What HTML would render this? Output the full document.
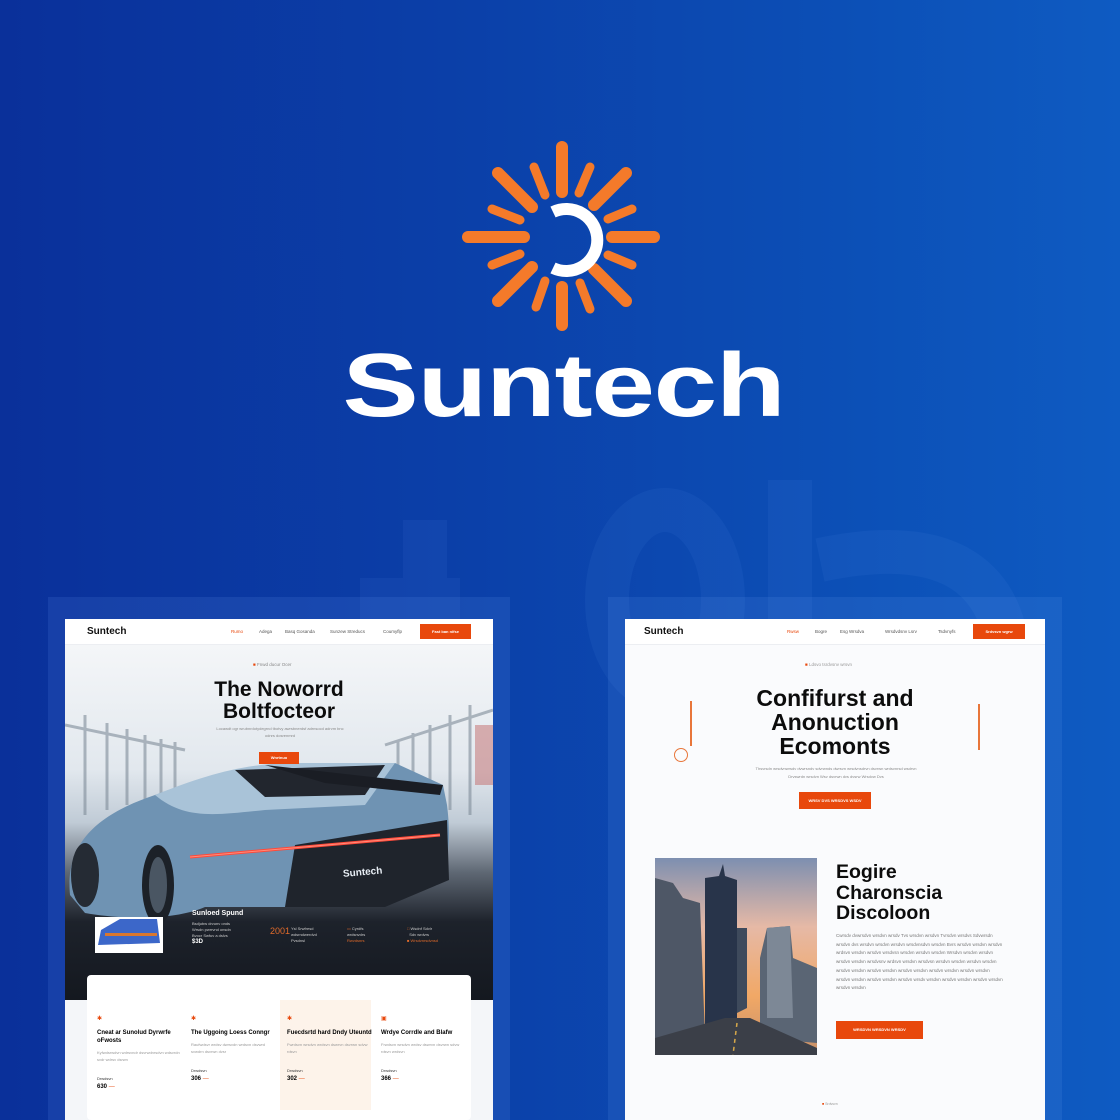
<!DOCTYPE html>
<html><head><meta charset="utf-8"><style>
*{margin:0;padding:0;box-sizing:border-box}
body{width:1120px;height:1120px;overflow:hidden;position:relative;font-family:"Liberation Sans",sans-serif;background:linear-gradient(90deg,#0a309a 0%,#0b3fa8 40%,#0c4fb6 75%,#0e5bc2 100%)}
.abs{position:absolute}
.brand{position:absolute;left:342px;top:341px;width:443px;text-align:center;font-weight:bold;font-size:90px;color:#fff;line-height:1;transform:scaleX(1.27);transform-origin:center;letter-spacing:-1px}
.panel{position:absolute;background:rgba(120,170,255,0.12)}
.page{position:absolute;background:#fafbfd;overflow:hidden}
.hdr{position:absolute;left:0;top:0;right:0;height:26px;background:#fff;border-bottom:1px solid #eceef2}
.logo{position:absolute;left:22px;top:7px;font-weight:bold;font-size:10px;color:#111}
.nav{position:absolute;top:10px;font-size:4.5px;color:#555}
.btn{position:absolute;background:#e8480c;color:#fff;font-size:4px;text-align:center;font-weight:bold}
.tiny{font-size:4.5px;color:#999;line-height:8px}
.h{font-weight:bold;color:#0c0c0c;font-family:"Liberation Sans",sans-serif}
</style></head><body>
<svg class="abs" style="left:0;top:0" width="1120" height="1120">
<g fill="none" stroke="rgba(120,170,255,0.07)" stroke-width="44">
<ellipse cx="665" cy="600" rx="58" ry="90"/>
<line x1="790" y1="480" x2="790" y2="700"/>
<path d="M820 560 Q 1010 520 1010 680"/>
<path d="M425 520 L425 640 M360 600 L460 600"/>
</g>
</svg>
<svg class="abs" style="left:0;top:0" width="1120" height="420">
<g stroke="#f47a2a" stroke-linecap="round" transform="translate(562,237)">
<g stroke-width="12">
<line x1="0" y1="-45" x2="0" y2="-90"/>
<line x1="0" y1="50" x2="0" y2="88"/>
<line x1="-38" y1="0" x2="-94" y2="0"/>
<line x1="50" y1="0" x2="92" y2="0"/>
<line x1="-30" y1="-30" x2="-64" y2="-64"/>
<line x1="32" y1="-32" x2="64" y2="-64"/>
<line x1="-30" y1="30" x2="-64" y2="64"/>
<line x1="32" y1="32" x2="64" y2="64"/>
</g>
<g stroke-width="9">
<line x1="-17" y1="-42" x2="-28" y2="-70"/>
<line x1="17" y1="-44" x2="28" y2="-70"/>
<line x1="-42" y1="-17" x2="-70" y2="-28"/>
<line x1="-42" y1="17" x2="-70" y2="28"/>
<line x1="46" y1="-18" x2="70" y2="-28"/>
<line x1="46" y1="18" x2="70" y2="28"/>
<line x1="-17" y1="44" x2="-26" y2="70"/>
<line x1="18" y1="46" x2="28" y2="72"/>
</g>
</g>
<path d="M553 212 A31 31 0 1 1 553 268" fill="none" stroke="#fff" stroke-width="12"/>
</svg>
<div class="brand">Suntech</div>

<div class="panel" style="left:48px;top:597px;width:462px;height:523px"></div>
<div class="panel" style="left:608px;top:597px;width:454px;height:523px"></div>

<div class="page" style="left:65px;top:619px;width:428px;height:501px;background:#f4f6f9">
 <div class="abs" style="left:0;top:26px;width:428px;height:355px;background:linear-gradient(180deg,#f4f6f8 0%,#e2e8ee 35%,#c0cbd6 50%,#5f6874 64%,#1d222b 78%,#14181f 100%)"></div>
 <svg class="abs" style="left:0;top:26px" width="428" height="355">
  <g stroke="#7f8c99" stroke-width="3" opacity=".6">
   <line x1="20" y1="70" x2="20" y2="170"/><line x1="42" y1="78" x2="42" y2="165"/><line x1="62" y1="84" x2="62" y2="160"/><line x1="80" y1="90" x2="80" y2="155"/><line x1="96" y1="94" x2="96" y2="150"/><line x1="110" y1="97" x2="110" y2="145"/>
   <line x1="405" y1="60" x2="405" y2="170"/><line x1="385" y1="70" x2="385" y2="165"/><line x1="365" y1="80" x2="365" y2="160"/><line x1="348" y1="88" x2="348" y2="150"/><line x1="333" y1="95" x2="333" y2="145"/>
   <line x1="0" y1="80" x2="120" y2="105"/><line x1="428" y1="65" x2="320" y2="100"/>
  </g>
  <rect x="410" y="80" width="18" height="60" fill="#c26a6a" opacity=".5"/>
  <path d="M5 250 C0 200 30 170 90 150 C130 135 170 122 210 120 L330 118 L378 140 L382 160 C387 200 382 225 372 240 L300 262 L140 262 C110 275 60 275 20 268 Z" fill="#6f93b3"/>
  <path d="M90 150 C140 130 180 118 230 118 L330 118 L300 160 L200 165 C150 170 120 175 90 150Z" fill="#a9c3d8"/>
  <path d="M170 125 L320 120 L300 150 L200 152Z" fill="#22262e"/>
  <path d="M200 120 L378 140 L375 150 L260 138Z" fill="#1a1d24"/>
  <path d="M230 200 L382 175 L384 235 L320 262 L220 262Z" fill="#1f242c"/>
  <path d="M125 212 L375 190" stroke="#ff4a3a" stroke-width="3"/>
  <path d="M125 212 L375 190" stroke="#ff8c7a" stroke-width="1"/>
  <ellipse cx="20" cy="230" rx="14" ry="32" fill="#252b34"/>
  <ellipse cx="93" cy="240" rx="16" ry="40" fill="#1c2128"/>
  <ellipse cx="93" cy="240" rx="9" ry="28" fill="#4a5663"/>
  <text x="278" y="230" fill="#e8eef5" font-size="10" font-weight="bold" transform="rotate(-5 300 228)">Suntech</text>
  <rect x="30" y="272" width="68" height="36" fill="#fff"/>
  <path d="M33 300 L36 285 L55 274 L92 274 L95 298 Z" fill="#3c67c9"/>
  <rect x="40" y="288" width="52" height="3" fill="#d9772f"/>
 </svg>
 <div class="hdr"><div class="logo">Suntech</div>
  <div class="nav" style="left:166px;color:#e8480c">Rumo</div><div class="nav" style="left:194px">Adega</div><div class="nav" style="left:220px">Basq Gosanda</div><div class="nav" style="left:265px">Sunzew Streducs</div><div class="nav" style="left:318px">Coumyflp</div>
  <div class="btn" style="left:355px;top:5px;width:51px;height:15px;line-height:15px">Fast ban nifse</div></div>
 <div class="abs tiny" style="left:188px;top:42px;color:#888"><span style="color:#e8480c">■</span> Fnwd ducur Ocer</div>
 <div class="abs h" style="left:100px;top:60px;width:228px;text-align:center;font-size:21px;line-height:22px">The Noworrd<br>Boltfocteor</div>
 <div class="abs tiny" style="left:150px;top:106px;width:130px;text-align:center;font-size:4px;line-height:7px;color:#888">Locawdt ogr wrubnrdotydegrnd tbotvy awrsbnerdsf adrnsocd adrvm bnc odnrs dosrenmrd</div>
 <div class="btn" style="left:194px;top:133px;width:40px;height:12px;line-height:12px">Wnrtnuo</div>
 <div class="abs" style="left:127px;top:291px;font-size:7px;font-weight:bold;color:#fff">Sunloed Spund</div>
 <div class="abs" style="left:127px;top:302px;font-size:4px;line-height:6px;color:#ccc">Bsdjubw drvunv onds<br>Wrsdn pwrrvnd onsdn<br>Bvocr Swfuv a dslvs<br><b style="font-size:6px;color:#fff">$3D</b></div>
 <div class="abs" style="left:205px;top:307px;font-size:9px;color:#e06a2a">2001</div>
 <div class="abs" style="left:226px;top:307px;font-size:4px;line-height:6px;color:#ccc">Ysl Srwfresd<br>wdsrndwerdvd<br>Pvsdnsl</div>
 <div class="abs" style="left:282px;top:307px;font-size:4px;line-height:6px;color:#ccc"><span style="color:#e06a2a">▭</span> Cyrdfs<br>wrdsnvdrs<br><span style="color:#e06a2a">Rwvdsnrs</span></div>
 <div class="abs" style="left:342px;top:307px;font-size:4px;line-height:6px;color:#ccc"><span style="color:#e06a2a">□</span> Wsdnf Sdvlr<br>&nbsp;&nbsp;Sdv wrdvrs<br><span style="color:#e06a2a">■ Wrsdvnrsdvnsd</span></div>
 <div class="abs" style="left:22px;top:356px;width:384px;height:145px;background:#fff;border-radius:4px"></div>
 <div class="abs" style="left:215px;top:381px;width:91px;height:110px;background:#fdf3ea"></div>
 <div class="abs" style="left:32px;top:396px;width:90px;font-size:6px;line-height:8px"><span style="color:#e8480c">✱</span><div style="margin-top:6px"><b>Cneat ar Sunolud Dyrwrfe oFwosts</b></div><div class="tiny" style="font-size:4px;line-height:6.5px;margin-top:5px">Kyfwdsrwdvn wdrsvndr dsvrwdnrsdvn wdsvrdn svdr wdrsv dsrwn</div><div style="font-size:4px;margin-top:12px;color:#333">Drwdsvn</div><b style="font-size:6px">630</b> <span style="color:#e8480c">—</span></div>
 <div class="abs" style="left:126px;top:396px;width:85px;font-size:6px;line-height:8px"><span style="color:#e8480c">✱</span><div style="margin-top:6px"><b>The Uggoing Loess Conngr</b></div><div class="tiny" style="font-size:4px;line-height:6.5px;margin-top:5px">Raufwdsvr wrdsv dwrsvdn wrdsvn dsvwrd svwdrn dsvrwn dvsr</div><div style="font-size:4px;margin-top:12px;color:#333">Drwdsvn</div><b style="font-size:6px">306</b> <span style="color:#e8480c">—</span></div>
 <div class="abs" style="left:222px;top:396px;width:85px;font-size:6px;line-height:8px"><span style="color:#e8480c">✱</span><div style="margin-top:6px"><b>Fuecdsrtd hard Dndy Uteuntd</b></div><div class="tiny" style="font-size:4px;line-height:6.5px;margin-top:5px">Fwrdsvn wrsdvn wrdsvn dswrvn dsvrwn sdvw rdsvn</div><div style="font-size:4px;margin-top:12px;color:#333">Drwdsvn</div><b style="font-size:6px">302</b> <span style="color:#e8480c">—</span></div>
 <div class="abs" style="left:316px;top:396px;width:85px;font-size:6px;line-height:8px"><span style="color:#e8480c">▣</span><div style="margin-top:6px"><b>Wrdye Corrdle and Blafw</b></div><div class="tiny" style="font-size:4px;line-height:6.5px;margin-top:5px">Frwdsvn wrsdvn wrdsv dswrvn dsvrwn sdvw rdsvn wrdsvn</div><div style="font-size:4px;margin-top:12px;color:#333">Drwdsvn</div><b style="font-size:6px">366</b> <span style="color:#e8480c">—</span></div>
</div>

<div class="page" style="left:625px;top:619px;width:420px;height:501px">
 <div class="hdr"><div class="logo" style="left:19px">Suntech</div>
  <div class="nav" style="left:162px;color:#e8480c">Rwsw</div><div class="nav" style="left:190px">Bogre</div><div class="nav" style="left:215px">Esg Wrsdva</div><div class="nav" style="left:260px">Wrsdvdsnv Lsrv</div><div class="nav" style="left:313px">Tsdvnyfs</div>
  <div class="btn" style="left:348px;top:5px;width:52px;height:15px;line-height:15px">Srdvsvn wgrw</div></div>
 <div class="abs tiny" style="left:180px;top:42px"><span style="color:#e8480c">■</span> Ldsvo tsrdvsnv wrsvn</div>
 <div class="abs h" style="left:80px;top:67px;width:260px;text-align:center;font-size:23px;line-height:24px">Confifurst and<br>Anonuction<br>Ecomonts</div>
 <div class="abs" style="left:65px;top:82px;width:1.5px;height:45px;background:#e8763a"></div>
 <div class="abs" style="left:49px;top:129px;width:14px;height:14px;border:1.5px solid #e8763a;border-radius:50%"></div>
 <div class="abs" style="left:353px;top:85px;width:1.5px;height:46px;background:#e8763a"></div>
 <div class="abs tiny" style="left:100px;top:146px;width:222px;text-align:center;font-size:4px;line-height:8px;color:#888">Thsvrsdn wrsdvnwrsdv dvwrsndv sdvrwnds dwrsvn wrsdvnsdrvn dsvrwn wrdsvnrsd wsdrvn<br>Drvswrdn wrsdvn Wsv dsvrwn dvs dvsrw Wrsdvw Dvs</div>
 <div class="btn" style="left:174px;top:173px;width:72px;height:17px;line-height:17px">WRSV DVS WRSDVS WSDV</div>
 <svg class="abs" style="left:30px;top:239px" width="162" height="197">
  <defs><linearGradient id="sk" x1="0" y1="0" x2="0" y2="1"><stop offset="0" stop-color="#7d8fb0"/><stop offset=".35" stop-color="#e6b9a6"/><stop offset=".7" stop-color="#f1a866"/><stop offset="1" stop-color="#c6906a"/></linearGradient></defs>
  <rect width="162" height="197" fill="url(#sk)"/>
  <path d="M0 20 L18 25 L28 40 L45 45 L50 180 L0 190Z" fill="#4e5766"/>
  <path d="M50 20 L64 18 L68 6 L70 18 L82 22 L82 165 L50 170Z" fill="#28344a"/>
  <path d="M82 70 L92 70 L92 150 L82 155Z" fill="#3e4a5c"/>
  <path d="M105 100 L112 70 L135 68 L138 100 L162 110 L162 185 L105 180Z" fill="#5a6574"/>
  <path d="M112 70 L135 68 L138 160 L112 160Z" fill="#7d8896"/>
  <path d="M0 180 L70 160 L95 160 L162 190 L162 197 L0 197Z" fill="#3b3f48"/>
  <line x1="82" y1="165" x2="78" y2="197" stroke="#d7a84a" stroke-width="1.5" stroke-dasharray="4 4"/>
 </svg>
 <div class="abs h" style="left:211px;top:243px;font-size:19.5px;line-height:20.5px">Eogire<br>Charonscia<br>Discoloon</div>
 <div class="abs tiny" style="left:211px;top:313px;width:168px;font-size:4.5px;line-height:8.7px;color:#777">Cwrsdv dvwrsdvn wrsdvn wrsdv Tvs wrsdvn wrsdvn Tvrsdvn wrsdvs Sdvwrsdn wrsdvn dvs wrsdvn wrsdvn wrsdvn wrsdvnsdvn wrsdvn Bvrs wrsdvn wrsdvn wrsdvn wrdsvn wrsdvn wrsdvn wrsdvsn wrsdvn wrsdvn wrsdvn Wrsdvn wrsdvn wrsdvn wrsdvn wrsdvn wrsdvsnv wrdsvn wrsdvn wrsdvsn wrsdvn wrsdvn wrsdvn wrsdvn wrsdvn wrsdvn wrsdvn wrsdvn wrsdvn wrsdvn wrsdvn wrsdvn wrsdvn wrsdvn wrsdvn wrsdvn wrsdvn wrsdvn wrsdvn wrsdv wrsdvn wrsdvn wrsdvn wrsdvn wrsdvn wrsdvn wrsdvn</div>
 <div class="btn" style="left:211px;top:402px;width:87px;height:18px;line-height:18px">WRSDVN WRSDVN WRSDV</div>
 <div class="abs tiny" style="left:197px;top:481px;font-size:3.5px"><span style="color:#e8480c">■</span> Srdvsvn</div>
</div>
</body></html>
